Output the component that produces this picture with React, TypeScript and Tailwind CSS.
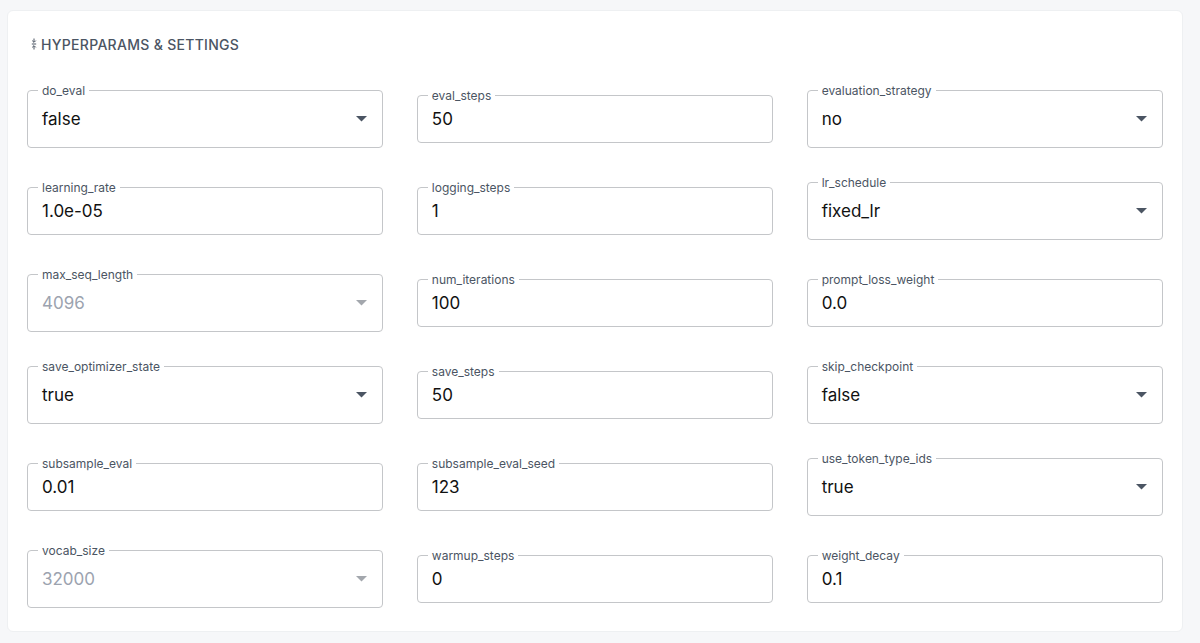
import React from 'react';

type Field = {
  label: string;
  value: string;
  select?: boolean;
  disabled?: boolean;
};

const fields: Field[] = [
  { label: 'do_eval', value: 'false', select: true },
  { label: 'eval_steps', value: '50' },
  { label: 'evaluation_strategy', value: 'no', select: true },
  { label: 'learning_rate', value: '1.0e-05' },
  { label: 'logging_steps', value: '1' },
  { label: 'lr_schedule', value: 'fixed_lr', select: true },
  { label: 'max_seq_length', value: '4096', select: true, disabled: true },
  { label: 'num_iterations', value: '100' },
  { label: 'prompt_loss_weight', value: '0.0' },
  { label: 'save_optimizer_state', value: 'true', select: true },
  { label: 'save_steps', value: '50' },
  { label: 'skip_checkpoint', value: 'false', select: true },
  { label: 'subsample_eval', value: '0.01' },
  { label: 'subsample_eval_seed', value: '123' },
  { label: 'use_token_type_ids', value: 'true', select: true },
  { label: 'vocab_size', value: '32000', select: true, disabled: true },
  { label: 'warmup_steps', value: '0' },
  { label: 'weight_decay', value: '0.1' },
];

const CollapseIcon = () => (
  <svg width="6" height="12" viewBox="0 0 6 12" className="text-[#4b5563]">
    <path d="M3 0.5 V4 M1.2 2.6 L3 4.4 L4.8 2.6" stroke="currentColor" strokeWidth="1" fill="none" />
    <path d="M0.8 6 H5.2" stroke="currentColor" strokeWidth="1" />
    <path d="M3 11.5 V8 M1.2 9.4 L3 7.6 L4.8 9.4" stroke="currentColor" strokeWidth="1" fill="none" />
  </svg>
);

const FormField = ({ field }: { field: Field }) => {
  const { label, value, select, disabled } = field;
  return (
    <div
      className={`relative flex items-center rounded-[4px] border border-[#c4c6c9] bg-white pl-[14px] pr-[15px] ${
        select ? 'h-[58px]' : 'h-[48px]'
      }`}
    >
      <span className="absolute left-[10px] top-0 -translate-y-1/2 bg-white px-[4px] text-[12px] leading-[14px] text-[#4b5563]">
        {label}
      </span>
      <span
        className={`flex-1 text-[17px] leading-[20px] ${
          disabled ? 'text-[#9ca3af]' : 'text-[#111111]'
        }`}
      >
        {value}
      </span>
      {select && (
        <svg width="11" height="6" viewBox="0 0 11 6">
          <path d="M0 0 H11 L5.5 5.5 Z" fill={disabled ? '#a3a7ad' : '#4b5563'} />
        </svg>
      )}
    </div>
  );
};

const App = () => {
  return (
    <div
      className="min-h-[643px] w-[1200px] bg-[#f6f7f9] pl-[7px] pt-[10px]"
      style={{ fontFamily: 'Inter, "Noto Sans", sans-serif' }}
    >
      <div className="h-[622px] w-[1176px] rounded-[6px] border border-[#eef0f2] bg-white px-[19px] pt-[22px]">
        <div className="flex h-[22px] items-center gap-[4px] pl-[4px]">
          <CollapseIcon />
          <h2 className="text-[14px] font-medium tracking-[0.3px] text-[#4b5563]">
            HYPERPARAMS &amp; SETTINGS
          </h2>
        </div>
        <div className="mt-[35px] grid grid-cols-3 gap-x-[33.5px] gap-y-[34px]">
          {fields.map((field, index) => (
            <div key={index} className="flex h-[58px] flex-col justify-center">
              <FormField field={field} />
            </div>
          ))}
        </div>
      </div>
    </div>
  );
};

export default App;
